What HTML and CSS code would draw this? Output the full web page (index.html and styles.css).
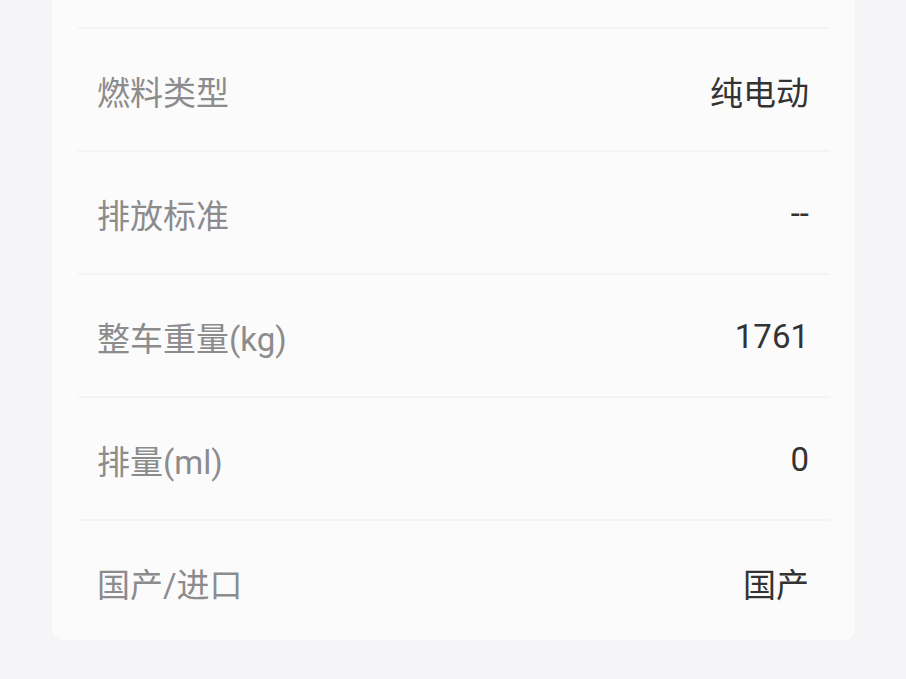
FILE: index.html
```html
<!DOCTYPE html>
<html lang="zh-CN">
<head>
    <meta charset="UTF-8">
    <meta name="viewport" content="width=device-width, initial-scale=1.0">
    <title>车辆参数</title>
    <link rel="stylesheet" href="styles.css">
</head>
<body>

<div class="spec-card">
    <div class="spec-row">
        <span class="spec-label">燃料类型</span>
        <span class="spec-value">纯电动</span>
    </div>
    <div class="spec-row">
        <span class="spec-label">排放标准</span>
        <span class="spec-value">--</span>
    </div>
    <div class="spec-row">
        <span class="spec-label">整车重量(kg)</span>
        <span class="spec-value">1761</span>
    </div>
    <div class="spec-row">
        <span class="spec-label">排量(ml)</span>
        <span class="spec-value">0</span>
    </div>
    <div class="spec-row">
        <span class="spec-label">国产/进口</span>
        <span class="spec-value">国产</span>
    </div>
</div>

</body>
</html>
```

FILE: styles.css
```css
body {
    font-family: Roboto, "Noto Sans CJK SC", sans-serif;
    background-color: #f5f5f7;
    margin: 0;
    padding: 0;
}
.spec-card {
    margin: 0 51px 0 52px;
    padding: 27px 25px 0 26px;
    background-color: #fbfbfc;
    border-radius: 0 0 12px 12px;
    height: 613px;
}
.spec-row {
    display: flex;
    justify-content: space-between;
    align-items: center;
    height: 119px;
    padding: 2px 21px 0 19px;
    border-top: 2px solid #f3f3f5;
    font-size: 33px;
}
.spec-label {
    color: #8c8c8c;
}
.spec-value {
    color: #333333;
}
```
